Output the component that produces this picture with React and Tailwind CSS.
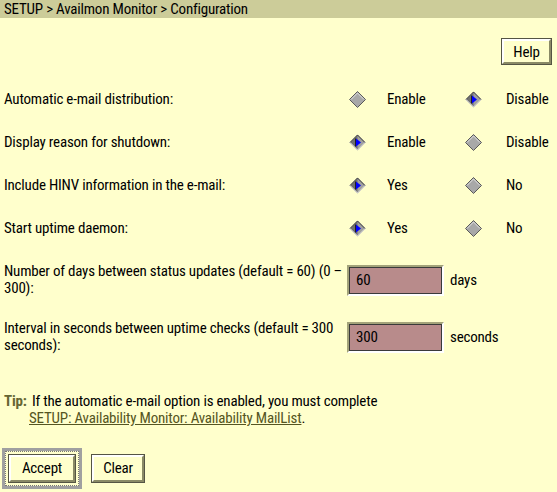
import React, { useState } from "react";

const font = { fontFamily: "Roboto, 'Liberation Sans', Arial, sans-serif" };

const Diamond = ({ on }) => (
  <svg width="17" height="17" viewBox="0 0 17 17">
    <polygon points="8.5,0.5 16.5,8.5 8.5,16.5 0.5,8.5" fill={on ? "#a0a0a0" : "#a8a8a8"} />
    {on && <polygon points="8.5,1.5 1.5,8.5 8.5,15.5" fill="#707070" />}
    {on ? (
      <>
        <polyline points="1,8.5 8.5,1 16,8.5" stroke="#3c3c3c" fill="none" />
        <polyline points="1,8.5 8.5,16 16,8.5" stroke="#d8d8d8" fill="none" />
        <polygon points="7,4.5 12,8.5 7,12.5" fill="#0000ff" />
        <line x1="6.5" y1="4.5" x2="6.5" y2="12.5" stroke="#202020" />
      </>
    ) : (
      <>
        <polygon points="8.5,0.5 16.5,8.5 8.5,16.5 0.5,8.5" fill="none" stroke="#5a5a5a" />
        <polyline points="2,8.5 8.5,2 15,8.5" stroke="#e0e0e0" fill="none" />
      </>
    )}
  </svg>
);

const Btn = ({ children, w }) => (
  <div className={`border border-[#555544] ${w}`}>
    <button
      className="w-full h-full bg-[#ffffcc] border-2 border-t-white border-l-white border-b-[#8a8a66] border-r-[#8a8a66] text-[15px] font-stretch-semi-condensed tracking-[-0.2px] text-black"
      style={font}
    >
      {children}
    </button>
  </div>
);

const RadioRow = ({ label, a, b, sel }) => (
  <div className="flex items-center h-[43px]">
    <div className="w-[349px] pl-[4px]">{label}</div>
    <Diamond on={sel === 0} />
    <div className="ml-[21px] w-[78px]">{a}</div>
    <Diamond on={sel === 1} />
    <div className="ml-[24px]">{b}</div>
  </div>
);

const Field = ({ l1, l2, value, unit }) => (
  <div className="flex items-center h-[32px]">
    <div className="w-[347px] pl-[4px] leading-[17px] whitespace-nowrap">
      <div>{l1}</div>
      <div>{l2}</div>
    </div>
    <div className="border-2 border-t-[#a3a37a] border-l-[#a3a37a] border-b-white border-r-white">
      <input
        defaultValue={value}
        className="w-[93px] h-[27px] border border-[#3a3a3a] bg-[#b88b8b] pl-[6px] text-[15px] font-stretch-semi-condensed tracking-[-0.2px] text-black outline-none"
        style={font}
      />
    </div>
    <div className="ml-[6px]">{unit}</div>
  </div>
);

export default function App() {
  const [rows] = useState([
    { label: "Automatic e-mail distribution:", a: "Enable", b: "Disable", sel: 1 },
    { label: "Display reason for shutdown:", a: "Enable", b: "Disable", sel: 0 },
    { label: "Include HINV information in the e-mail:", a: "Yes", b: "No", sel: 0 },
    { label: "Start uptime daemon:", a: "Yes", b: "No", sel: 0 },
  ]);

  return (
    <div
      className="w-[557px] h-[492px] bg-[#ffffcc] text-black text-[15px] font-stretch-semi-condensed tracking-[-0.2px] overflow-hidden"
      style={font}
    >
      <div className="h-[18px] bg-[#cccc99] pl-[4px] text-[15px] leading-[18px]">
        SETUP &gt; Availmon Monitor &gt; Configuration
      </div>

      <div className="flex justify-end pr-[5px] mt-[20px]">
        <Btn w="w-[51px] h-[27px]">Help</Btn>
      </div>

      <div className="mt-[13px]">
        {rows.map((r) => (
          <RadioRow key={r.label} {...r} />
        ))}
      </div>

      <div className="mt-[14px]">
        <Field l1="Number of days between status updates (default = 60) (0 –" l2="300):" value="60" unit="days" />
      </div>
      <div className="mt-[25px]">
        <Field l1="Interval in seconds between uptime checks (default = 300" l2="seconds):" value="300" unit="seconds" />
      </div>

      <div className="mt-[40px] leading-[17px]">
        <div className="pl-[4px]">
          <span className="font-bold text-[#666633]">Tip:</span>{" "}
          <span className="ml-[2px]">If the automatic e-mail option is enabled, you must complete</span>
        </div>
        <div className="pl-[29px]">
          <a href="#" className="underline text-[#555522]">
            SETUP: Availability Monitor: Availability MailList
          </a>
          .
        </div>
      </div>

      <div className="flex items-start mt-[21px]">
        <div className="ml-[2px] border-[3px] border-[#a0a0a0]">
          <div className="border border-dotted border-[#777] p-[2px]">
            <Btn w="w-[68px] h-[29px]">Accept</Btn>
          </div>
        </div>
        <div className="ml-[9px] mt-[6px]">
          <Btn w="w-[54px] h-[29px]">Clear</Btn>
        </div>
      </div>
    </div>
  );
}
